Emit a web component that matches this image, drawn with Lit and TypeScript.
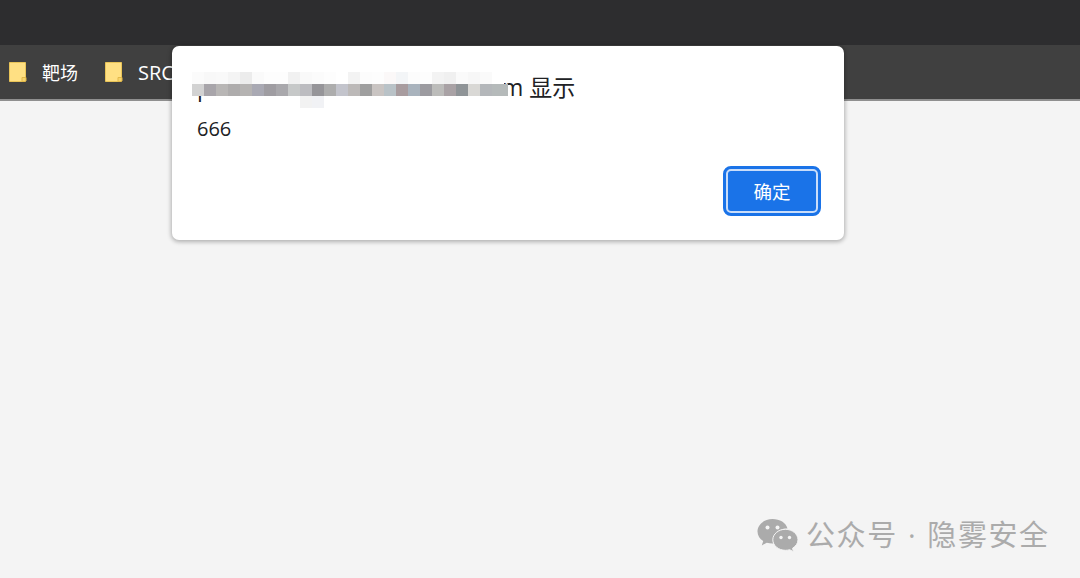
import { LitElement, html, css, svg } from 'lit';
import { customElement } from 'lit/decorators.js';

const BOOKMARKS = [{ label: '靶场', latin: false }, { label: 'SRC', latin: true }];

// mosaic over the blurred host name, one row per strip
const MOSAIC_TOP = ['#fbfbfb', '#f8f8f8', '#f9f9f9', '#f4f4f4', '#ececec', '#fafafa', '#fdfdfd', '#fdfdfd', '#f1f1f1', '#f9f9f9', '#fbfbfb', '#fdfdfd', '#fff', '#f3f3f3', '#fcfcfc', '#fdfdfd', '#fbf8f8', '#f3f5f7', '#fcfcfc', '#fdfdfd', '#f3f3f3', '#f0f0f0', '#fafafa', '#f7f7f7', '#fafafa', '#fff'];
const MOSAIC_MID = ['#d2d2d2', '#a8a5aa', '#b8b6b5', '#aeacac', '#b5b3b2', '#a9a9b3', '#9f9da2', '#a9a8ac', '#c6c8c8', '#bcbcc0', '#969599', '#adadad', '#c3c4cc', '#bcb9b8', '#9f9f9f', '#c9c4c2', '#b9c2c7', '#a89c9f', '#a9b3bd', '#9c9ba0', '#bcbcba', '#a9a2a5', '#8f9497', '#d9d8d5', '#b4b7ba', '#b5baba'];
const CLEAR = 'transparent';
const MOSAIC_LOW = [CLEAR, CLEAR, CLEAR, CLEAR, CLEAR, CLEAR, CLEAR, CLEAR, CLEAR, '#f2f2f2', '#f1f2f5'];

const folderIcon = svg`
  <path d="M0.5 0.5H16.5V16L13 19.5H0.5Z" fill="#ffe083" stroke="#e9c458"/>
  <path d="M13 19.5V15.5H17V19L16 19.5Z" fill="#f7d46c" stroke="#e3b94a"/>`;

const wechatIcon = svg`
  <path d="M15.5 1C7 1 .5 6.600 .5 13.500c0 4 2.200 7.300 5.700 9.600l-1.400 4.300 5-2.600c1.800.5 3.700.8 5.700.8h1.100c-.4-1.200-.6-2.400-.6-3.700 0-6.400 6-11.500 13.400-11.500h1.100C29 4.800 22.800 1 15.500 1Z" fill="#ababab"/>
  <path d="M41 21.800c0-5.800-5.800-10.500-12.600-10.500s-12.600 4.700-12.600 10.500 5.800 10.500 12.600 10.500c1.500 0 3-.2 4.300-.6l3.900 2.100-1.100-3.500c3.300-2.100 5.500-5 5.500-8.500Z" fill="#ababab" stroke="#f4f4f4" stroke-width="1"/>
  <circle cx="10.500" cy="9.500" r="2" fill="#f4f4f4"/><circle cx="20.500" cy="9.500" r="2" fill="#f4f4f4"/>
  <circle cx="24" cy="19.500" r="1.700" fill="#f4f4f4"/><circle cx="32.500" cy="19.500" r="1.700" fill="#f4f4f4"/>`;

@customElement('app-root')
export class AppRoot extends LitElement {
  private _strip(colors: string[], cls: string) {
    return html`<div class="strip ${cls}">
      ${colors.map(c => html`<i style="background:${c}"></i>`)}
    </div>`;
  }

  render() {
    return html`
      <div class="page">
        <div class="titlebar"></div>
        <div class="bookmarks">
          ${BOOKMARKS.map(b => html`
            <div class="bookmark">
              <svg width="18" height="20" viewBox="0 0 18 20">${folderIcon}</svg>
              <span class=${b.latin ? 'latin' : ''}>${b.label}</span>
            </div>
          `)}
        </div>
        <div class="content"></div>

        <div class="dialog">
          <div class="title"><span class="host">p</span>m 显示</div>
          <div class="message">666</div>
          <div class="actions">
            <button class="ok">确定</button>
          </div>
          <div class="mosaic">
            ${this._strip(MOSAIC_TOP, 'top')}
            ${this._strip(MOSAIC_MID, 'mid')}
            ${this._strip(MOSAIC_LOW, 'low')}
          </div>
        </div>

        <div class="watermark">
          <svg width="42" height="35" viewBox="0 0 42 35">${wechatIcon}</svg>
          <span class="wm-text">公众号 · 隐雾安全</span>
        </div>
      </div>
    `;
  }

  static styles = css`
    :host {
      display: block;
      font-family: "Open Sans", "Noto Sans CJK SC", sans-serif;
    }
    .page {
      position: relative;
      width: 1080px;
      height: 578px;
      display: flex;
      flex-direction: column;
      overflow: hidden;
      background: #f4f4f4;
    }
    .titlebar {
      height: 45px;
      background: #2d2d2f;
    }
    .bookmarks {
      height: 54px;
      box-sizing: border-box;
      display: flex;
      align-items: center;
      gap: 27px;
      padding: 0 0 0 9px;
      background: #404040;
    }
    .bookmark {
      display: flex;
      align-items: center;
      gap: 15px;
      color: #fff;
      font-size: 18px;
    }
    .bookmark svg {
      display: block;
    }
    .latin {
      font-size: 20px;
    }
    .content {
      flex: 1;
      border-top: 2px solid #8f8f8f;
    }
    .dialog {
      position: absolute;
      left: 172px;
      top: 46px;
      width: 672px;
      height: 194px;
      box-sizing: border-box;
      padding: 25px 23px 0 25px;
      background: #fff;
      border-radius: 7px;
      box-shadow: 0 1px 4px 1px rgba(0, 0, 0, 0.28);
      color: #202124;
    }
    .title {
      font-size: 23px;
      line-height: 32px;
      white-space: nowrap;
    }
    .host {
      display: inline-block;
      width: 305px;
    }
    .message {
      margin-top: 12px;
      font-size: 20px;
      line-height: 28px;
    }
    .actions {
      display: flex;
      justify-content: flex-end;
      margin-top: 23px;
    }
    .ok {
      box-sizing: border-box;
      width: 98px;
      height: 50px;
      border: 3px solid #1a73e8;
      border-radius: 8px;
      outline: 2px solid #c9ddfa;
      outline-offset: -5px;
      background: #1a73e8;
      color: #fff;
      font: inherit;
      font-size: 18.5px;
      padding: 0;
    }
    .mosaic {
      position: absolute;
      left: 20px;
      top: 26px;
    }
    .strip {
      display: flex;
      height: 12px;
    }
    .strip i {
      display: block;
      width: 12px;
      height: 100%;
      flex: none;
    }
    .strip.mid i:last-child {
      width: 16px;
    }
    .watermark {
      position: absolute;
      left: 757px;
      top: 516px;
      display: flex;
      align-items: center;
      gap: 7px;
      color: #ababab;
    }
    .wm-text {
      font-size: 29px;
      line-height: 38px;
      letter-spacing: 1.6px;
      word-spacing: 1px;
      white-space: nowrap;
    }
  `;
}
